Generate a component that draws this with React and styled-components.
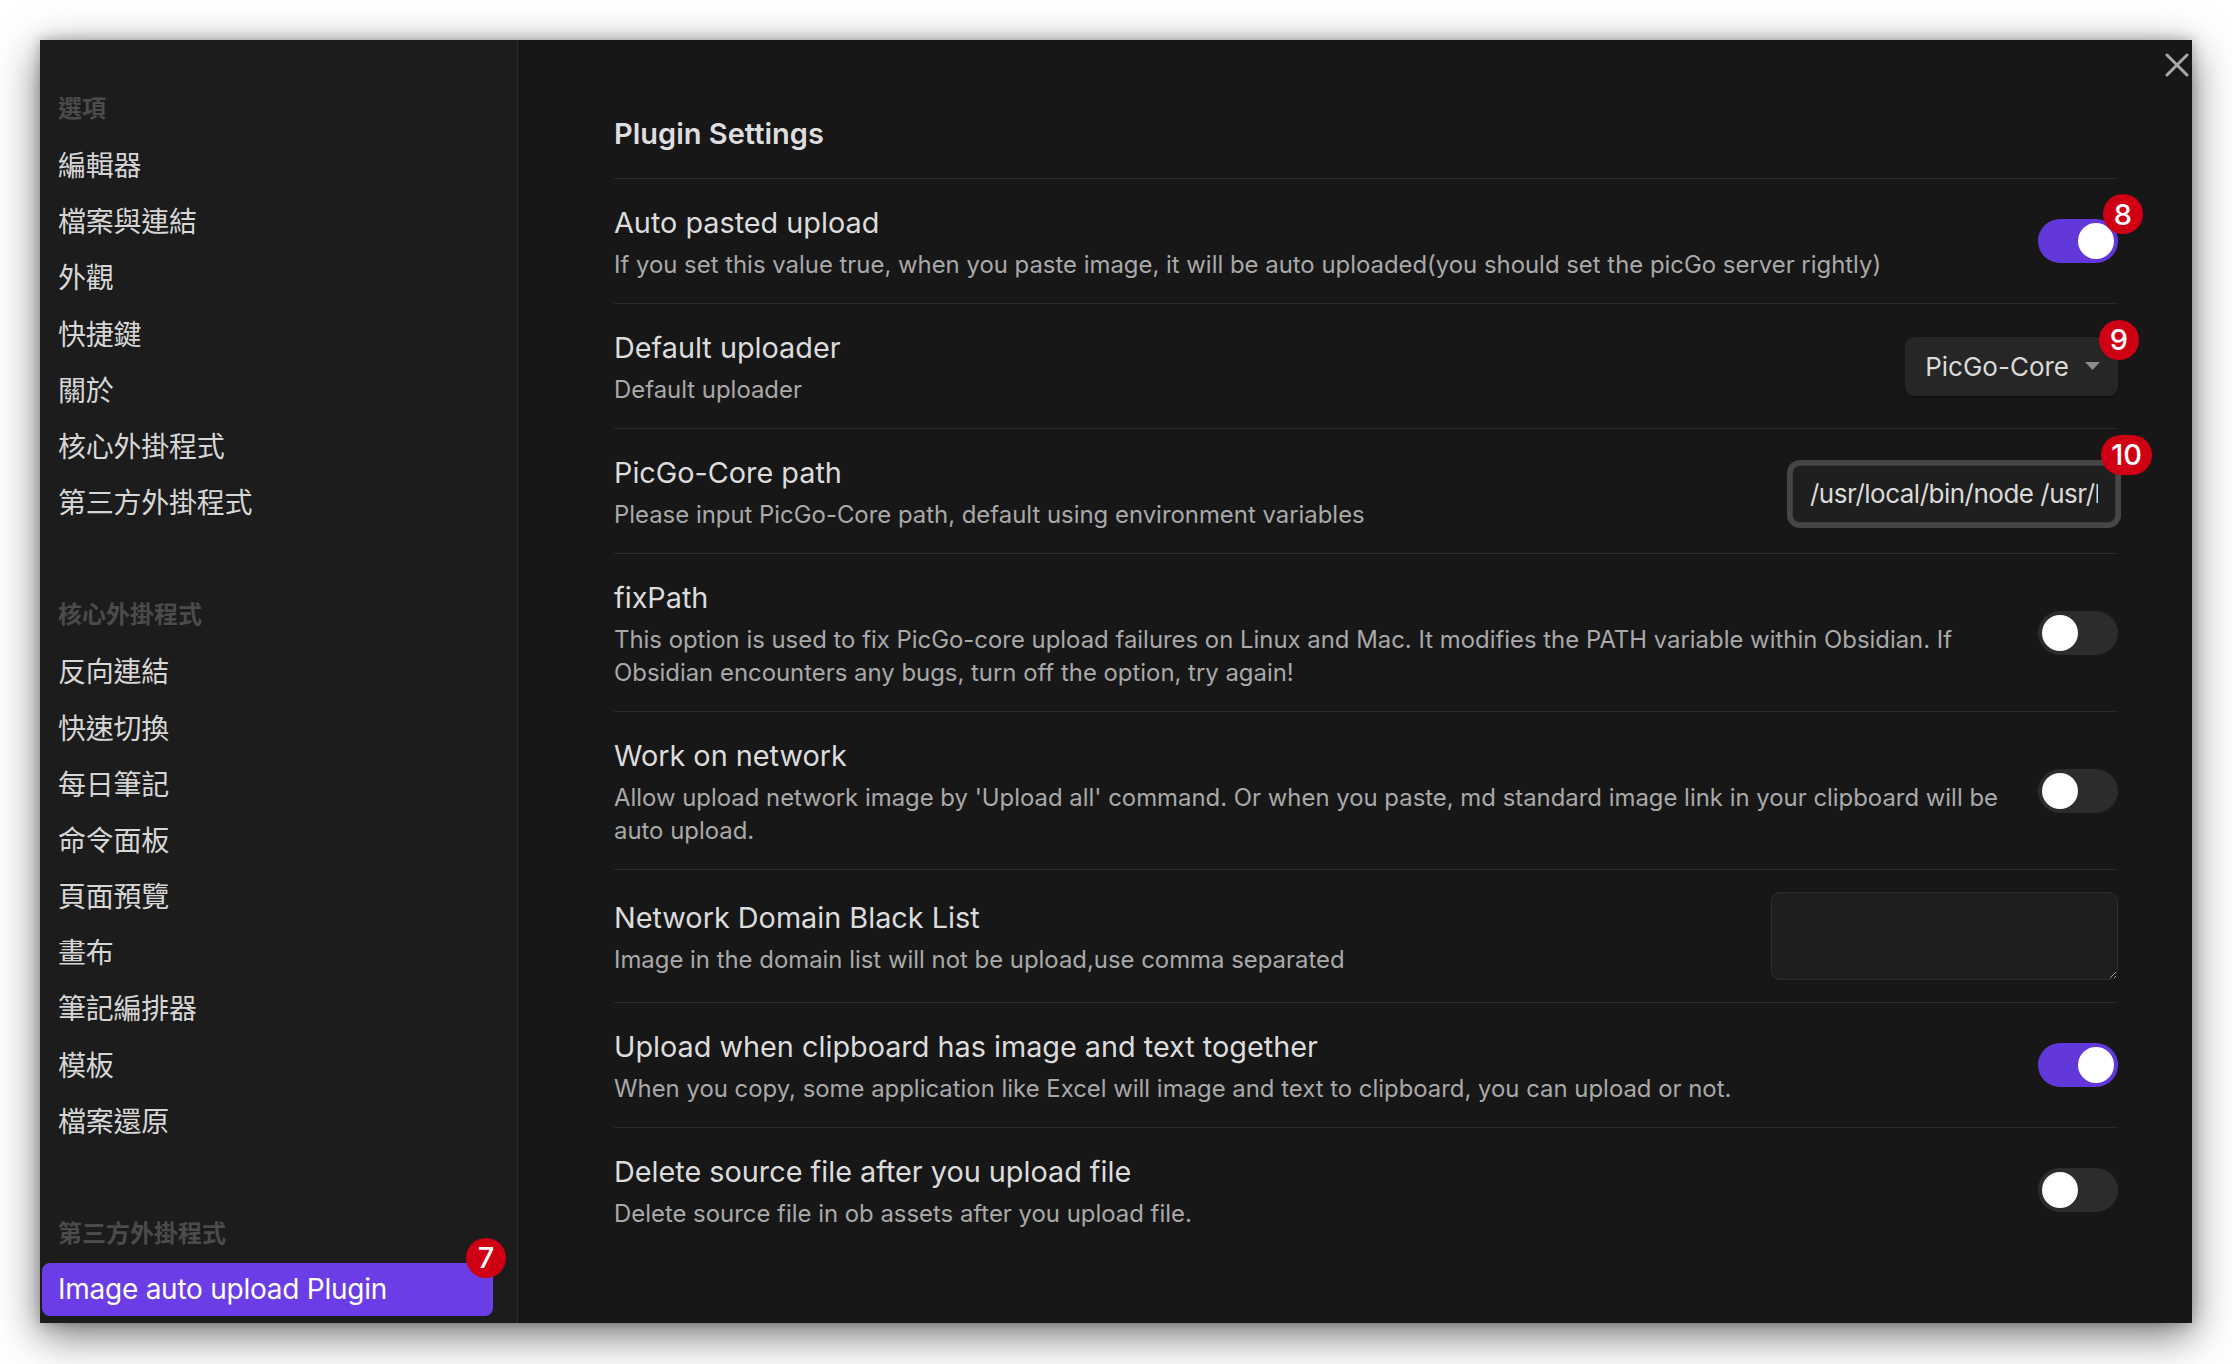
import styled, { createGlobalStyle } from "styled-components";

const GlobalStyle = createGlobalStyle`
  * { box-sizing: border-box; }
  body {
    margin: 0;
    background: #ffffff;
    font-family: Inter, "Noto Sans CJK TC", sans-serif;
  }
`;

const navGroups = [
  {
    title: "選項",
    items: ["編輯器", "檔案與連結", "外觀", "快捷鍵", "關於", "核心外掛程式", "第三方外掛程式"],
  },
  {
    title: "核心外掛程式",
    items: ["反向連結", "快速切換", "每日筆記", "命令面板", "頁面預覽", "畫布", "筆記編排器", "模板", "檔案還原"],
  },
  {
    title: "第三方外掛程式",
    items: ["Image auto upload Plugin"],
    selected: "Image auto upload Plugin",
  },
];

const Caret = () => (
  <svg width="17" height="10" viewBox="0 0 17 10">
    <path d="M1 1h15l-7.5 8z" fill="#8c8c8c" />
  </svg>
);

const CloseIcon = () => (
  <svg width="24" height="24" viewBox="0 0 24 24">
    <path d="M2 2l20 20M22 2L2 22" stroke="#a9a9a9" strokeWidth="3" strokeLinecap="round" />
  </svg>
);

const App = () => {
  return (
    <Page>
      <GlobalStyle />
      <Window>
        <Sidebar>
          {navGroups.map((group) => (
            <NavGroup key={group.title}>
              <NavHeader>{group.title}</NavHeader>
              {group.items.map((item) => (
                <NavItem key={item} $selected={item === group.selected}>
                  {item}
                  {item === group.selected && <Badge $top={-25} $right={-13}>7</Badge>}
                </NavItem>
              ))}
            </NavGroup>
          ))}
        </Sidebar>

        <Content>
          <CloseButton>
            <CloseIcon />
          </CloseButton>
          <Heading>Plugin Settings</Heading>

          <SettingItem>
            <Info>
              <Name>Auto pasted upload</Name>
              <Desc>
                If you set this value true, when you paste image, it will be auto uploaded(you should set the picGo server rightly)
              </Desc>
            </Info>
            <Control>
              <Toggle $on />
              <Badge $top={-25} $right={-25}>8</Badge>
            </Control>
          </SettingItem>

          <SettingItem>
            <Info>
              <Name>Default uploader</Name>
              <Desc>Default uploader</Desc>
            </Info>
            <Control>
              <Dropdown>
                PicGo-Core
                <Caret />
              </Dropdown>
              <Badge $top={-17} $right={-21}>9</Badge>
            </Control>
          </SettingItem>

          <SettingItem>
            <Info>
              <Name>PicGo-Core path</Name>
              <Desc>Please input PicGo-Core path, default using environment variables</Desc>
            </Info>
            <Control>
              <TextInput readOnly value="/usr/local/bin/node /usr/local/lib/node_modules/picgo/bin/picgo" />
              <Badge $top={-25} $right={-34}>10</Badge>
            </Control>
          </SettingItem>

          <SettingItem>
            <Info>
              <Name>fixPath</Name>
              <Desc>
                This option is used to fix PicGo-core upload failures on Linux and Mac. It modifies the PATH variable within Obsidian. If Obsidian encounters any bugs, turn off the option, try again!
              </Desc>
            </Info>
            <Control>
              <Toggle />
            </Control>
          </SettingItem>

          <SettingItem>
            <Info>
              <Name>Work on network</Name>
              <Desc>
                Allow upload network image by 'Upload all' command. Or when you paste, md standard image link in your clipboard will be auto upload.
              </Desc>
            </Info>
            <Control>
              <Toggle />
            </Control>
          </SettingItem>

          <SettingItem>
            <Info>
              <Name>Network Domain Black List</Name>
              <Desc>Image in the domain list will not be upload,use comma separated</Desc>
            </Info>
            <Control>
              <TextArea />
            </Control>
          </SettingItem>

          <SettingItem>
            <Info>
              <Name>Upload when clipboard has image and text together</Name>
              <Desc>
                When you copy, some application like Excel will image and text to clipboard, you can upload or not.
              </Desc>
            </Info>
            <Control>
              <Toggle $on />
            </Control>
          </SettingItem>

          <SettingItem>
            <Info>
              <Name>Delete source file after you upload file</Name>
              <Desc>Delete source file in ob assets after you upload file.</Desc>
            </Info>
            <Control>
              <Toggle />
            </Control>
          </SettingItem>
        </Content>
      </Window>
    </Page>
  );
};

export default App;

const Page = styled.div`
  padding: 40px 40px 41px 40px;
`;

const Window = styled.div`
  width: 2152px;
  height: 1283px;
  display: grid;
  grid-template-columns: 478px 1fr;
  background: #171717;
  box-shadow: 0 12px 40px rgba(0, 0, 0, 0.55), 0 0 12px rgba(0, 0, 0, 0.25);
  overflow: hidden;
`;

const Sidebar = styled.nav`
  background: #1c1c1c;
  border-right: 1px solid #2a2a2a;
  padding: 35.5px 24px 0 2px;
  display: flex;
  flex-direction: column;
`;

const NavGroup = styled.div`
  display: flex;
  flex-direction: column;

  & + & {
    margin-top: 51px;
  }
`;

const NavHeader = styled.div`
  height: 62px;
  display: flex;
  align-items: center;
  padding-left: 16px;
  font-size: 24px;
  font-weight: 700;
  color: #4b4b4b;
`;

const NavItem = styled.div`
  position: relative;
  height: 53px;
  margin-bottom: 3.2px;
  padding-left: 16px;
  display: flex;
  align-items: center;
  font-size: 28px;
  letter-spacing: -0.25px;
  color: ${(p) => (p.$selected ? "#ffffff" : "#d6d6d6")};
  background: ${(p) => (p.$selected ? "#6a3de6" : "transparent")};
  border-radius: 8px;
`;

const Badge = styled.span`
  position: absolute;
  top: ${(p) => p.$top}px;
  right: ${(p) => p.$right}px;
  min-width: 40px;
  height: 40px;
  padding: 0 10px;
  border-radius: 20px;
  background: #cf0014;
  color: #ffffff;
  font-size: 29px;
  font-weight: 500;
  letter-spacing: 0;
  display: flex;
  align-items: center;
  justify-content: center;
  z-index: 2;
`;

const Content = styled.main`
  position: relative;
  padding: 52px 74px 0 96px;
  display: flex;
  flex-direction: column;
`;

const CloseButton = styled.div`
  position: absolute;
  top: 13px;
  right: 3px;
  width: 24px;
  height: 24px;
  display: flex;
`;

const Heading = styled.h3`
  margin: 0;
  padding: 21px 0 23px;
  font-size: 29px;
  line-height: 42px;
  font-weight: 600;
  color: #dedede;
`;

const SettingItem = styled.div`
  display: flex;
  align-items: center;
  gap: 30px;
  padding: 22px 0;
  border-top: 1px solid #2a2a2a;
`;

const Info = styled.div`
  flex: 1;
  min-width: 0;
`;

const Name = styled.div`
  font-size: 28.8px;
  line-height: 43px;
  color: #dcdcdc;
`;

const Desc = styled.div`
  margin-top: 4px;
  font-size: 23.9px;
  line-height: 33px;
  color: #a9a9a9;
`;

const Control = styled.div`
  position: relative;
  flex: none;
  display: flex;
  align-items: center;
`;

const Toggle = styled.div`
  position: relative;
  width: 80px;
  height: 44px;
  border-radius: 22px;
  background: ${(p) => (p.$on ? "#6338da" : "#2c2c2c")};

  &::after {
    content: "";
    position: absolute;
    top: 4px;
    left: ${(p) => (p.$on ? "40px" : "4px")};
    width: 36px;
    height: 36px;
    border-radius: 50%;
    background: #ffffff;
  }
`;

const Dropdown = styled.div`
  height: 59px;
  padding: 0 17px 0 20px;
  display: flex;
  align-items: center;
  gap: 15px;
  border-radius: 9px;
  background: #262626;
  box-shadow: 0 1px 3px rgba(0, 0, 0, 0.35);
  font-size: 26px;
  color: #dadada;
`;

const TextInput = styled.input`
  width: 324px;
  height: 58px;
  margin: 5px 2px 0 0;
  padding: 0 17px;
  border: 1px solid #3c3c3c;
  border-radius: 8px;
  background: #1f1f1f;
  box-shadow: 0 0 0 5px #464646;
  font-family: Inter, sans-serif;
  font-size: 26px;
  letter-spacing: -0.5px;
  color: #dadada;
  outline: none;
`;

const TextArea = styled.textarea`
  width: 347px;
  height: 88px;
  border: 1px solid #2e2e2e;
  border-radius: 9px;
  background: #1e1e1e;
  outline: none;
`;
